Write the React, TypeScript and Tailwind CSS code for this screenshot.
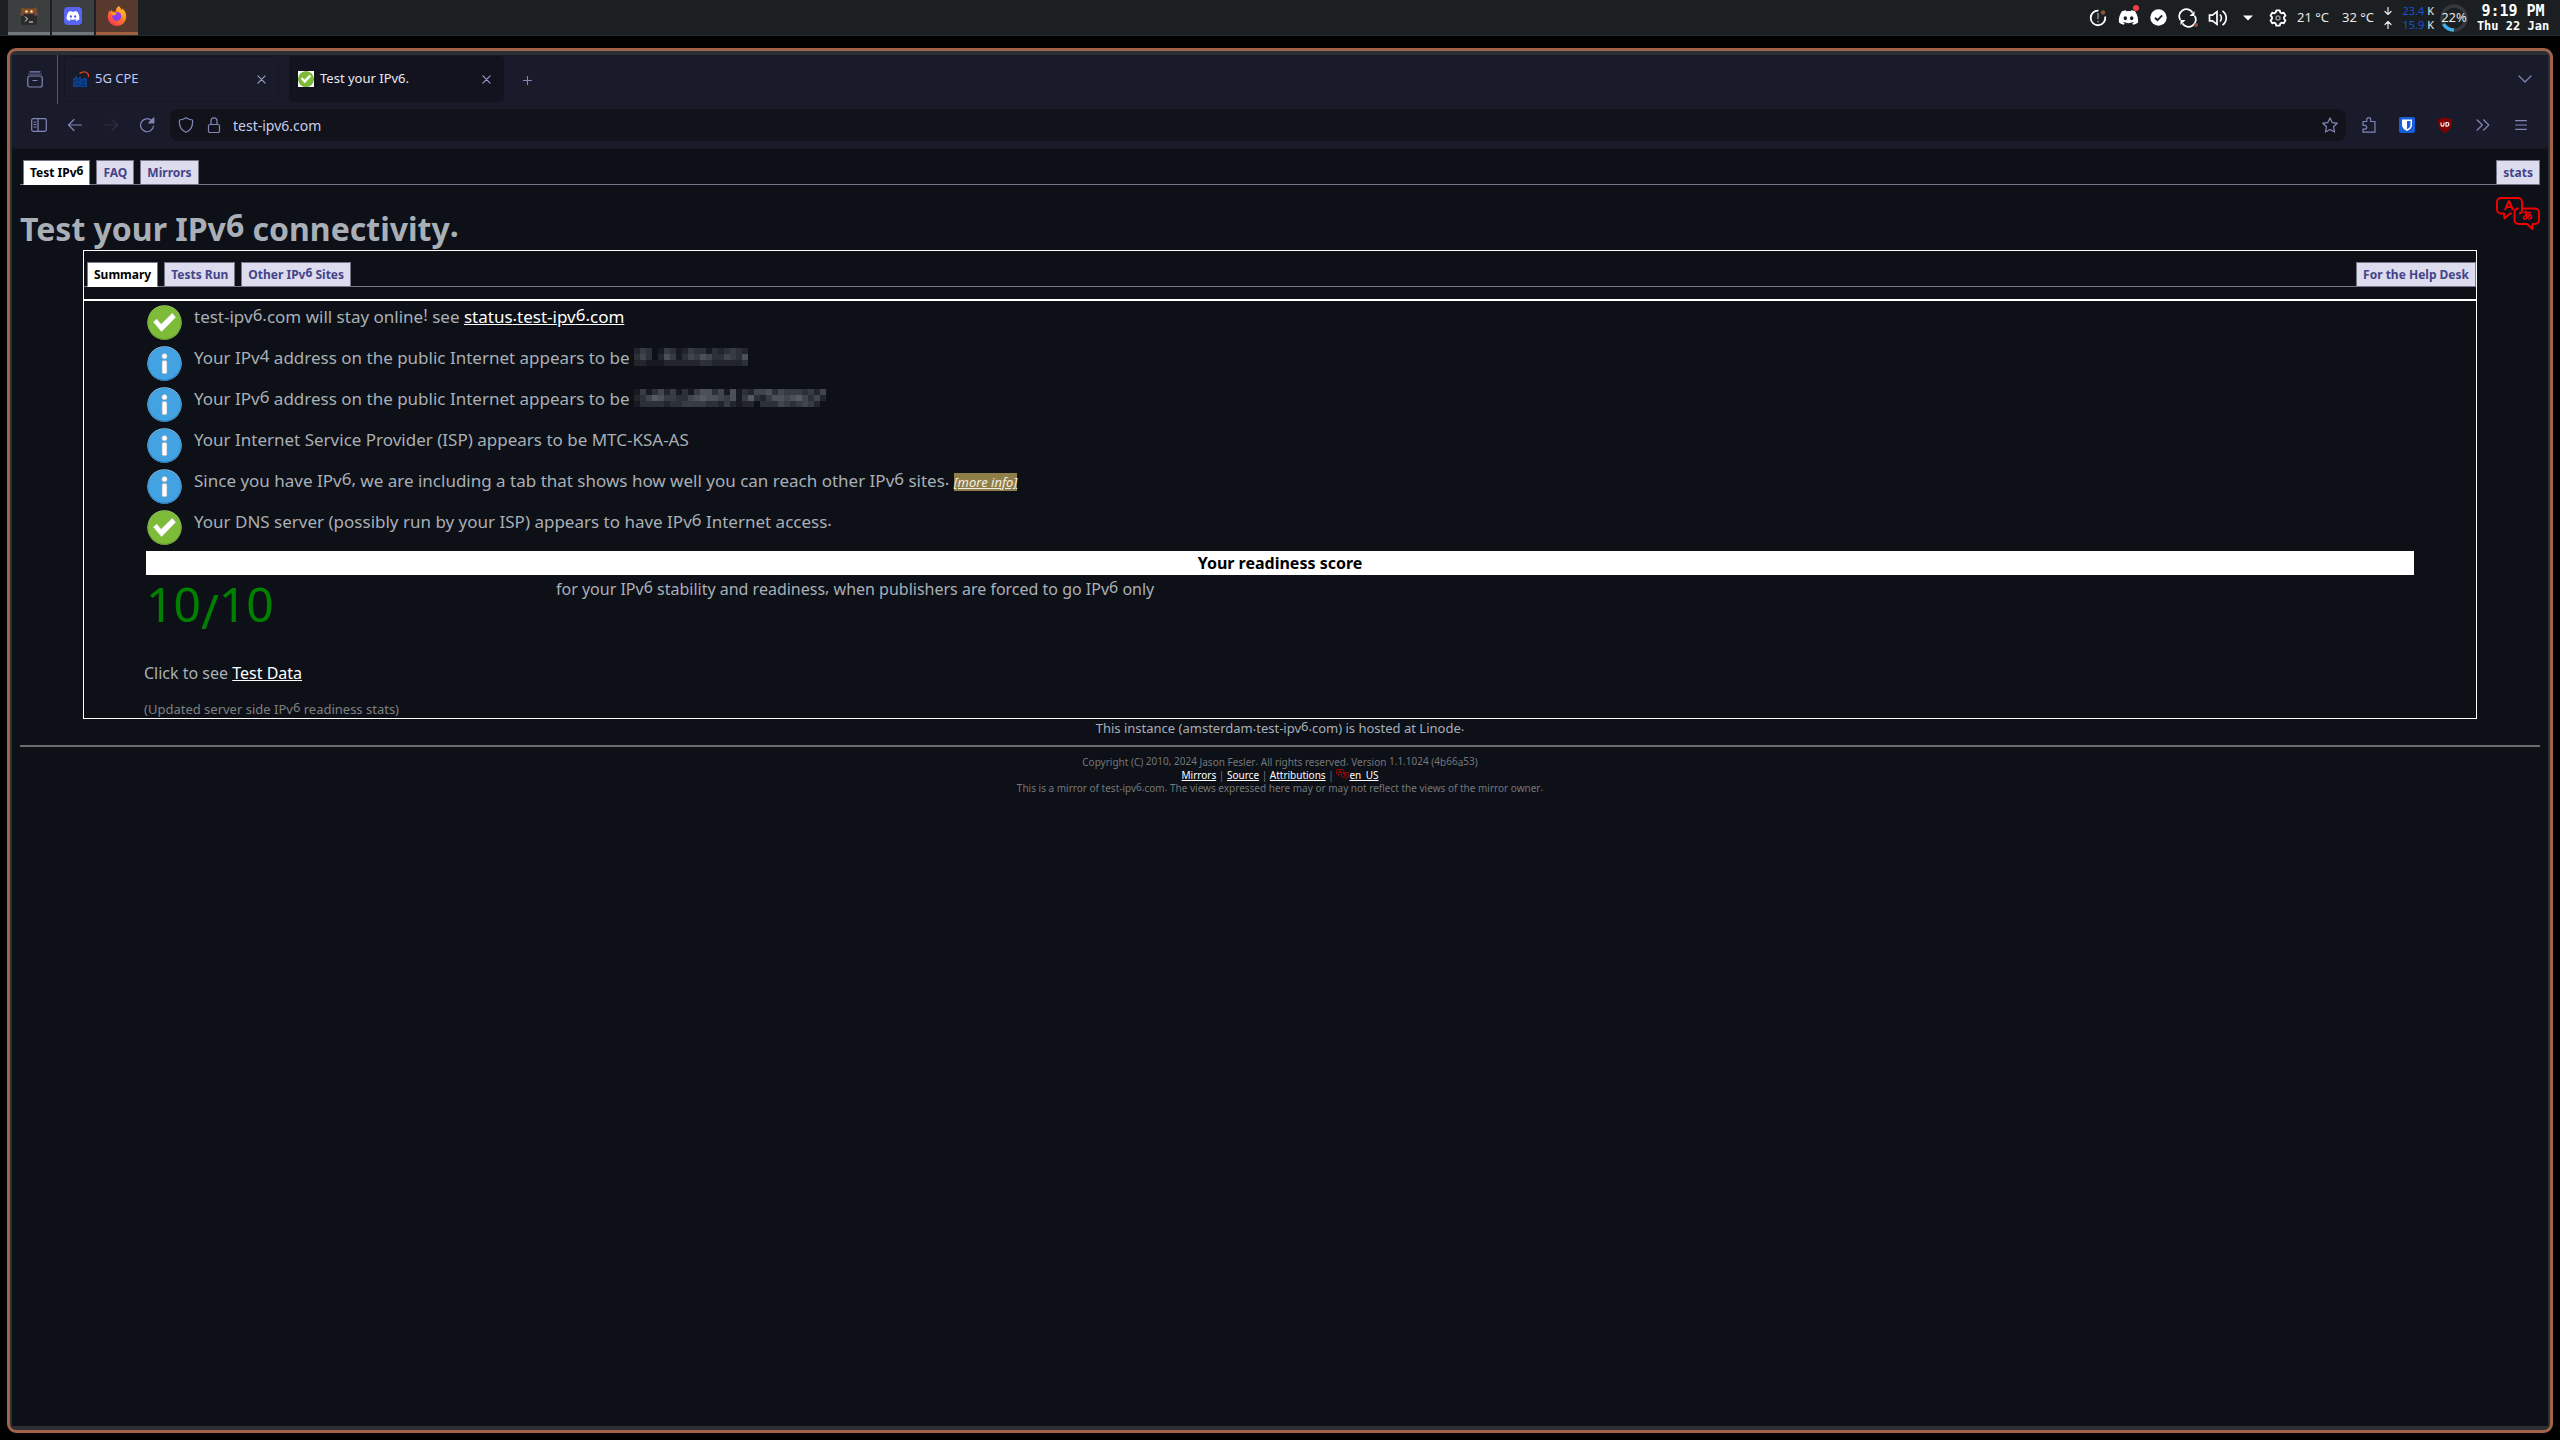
import type { ReactNode } from "react";
import { FaDiscord } from "react-icons/fa";

function Lift({ text, by = "align-[2px]" }: { text: string; by?: string }) {
  return (
    <>
      {text.split(/([0-9.,!]+)/).map((part, i) =>
        i % 2 ? (
          <span key={i} className={`leading-none ${by}`}>
            {part}
          </span>
        ) : (
          part
        )
      )}
    </>
  );
}

type Draw = { className?: string };

const line = {
  fill: "none",
  stroke: "currentColor",
  strokeWidth: 1.2,
  strokeLinecap: "round" as const,
  strokeLinejoin: "round" as const,
};

function TerminalIcon() {
  return (
    <svg viewBox="0 0 18 20" className="h-5 w-[18px]">
      <rect x="1" y="7" width="16" height="12" rx="2" fill="#2b2b2b" />
      <path d="M1 1l3 1.5h10L17 1l-.5 4L18 8H0l1.500-3z" fill="#8a4b22" />
      <circle cx="2" cy="8" r="2" fill="#6b4a40" />
      <circle cx="16" cy="8" r="2" fill="#6b4a40" />
      <circle cx="6.500" cy="5.500" r="1.200" fill="#ffe9c9" />
      <circle cx="11.500" cy="5.500" r="1.200" fill="#ffe9c9" />
      <path d="M5 10.500l2.500 2.500L5 15.500M9 16h4" fill="none" stroke="#eee" strokeWidth="1" />
    </svg>
  );
}

function FirefoxIcon() {
  return (
    <svg viewBox="0 0 20 20" className="size-5">
      <defs>
        <linearGradient id="fox" x1="1" y1="0" x2="0.200" y2="1">
          <stop offset="0" stopColor="#ffd23f" />
          <stop offset="0.450" stopColor="#ff8a1c" />
          <stop offset="1" stopColor="#ff3052" />
        </linearGradient>
      </defs>
      <path
        d="M11.500 0c2 1.200 2.600 3 3.200 4.200 0-.5.600-1.200.9-1.400 2.600 2.400 3.700 5 3.600 7.800A9.200 9.200 0 0 1 .8 11C.7 8 1.600 5.600 2.600 4.400l.6 1.300L4.700 3.800l.8 1.900c1-.4 2.200-.3 3.200.2C8.700 3.600 9.700 1.400 11.500 0z"
        fill="url(#fox)"
      />
      <circle cx="9.800" cy="10.400" r="4.500" fill="#8c3bf0" />
      <path d="M4 6.300c2-.8 4.500 0 6 1.600-1 .9-2.600.8-3.600 1.700C5.500 9 4.300 8 4 6.300z" fill="#ff9a1f" />
      <path d="M12 4.500c2.500 1.500 3.500 4.500 2 7.500 1.700-1.700 2.200-5-.2-7.500z" fill="#ffb52a" />
    </svg>
  );
}

function UpdateIcon() {
  return (
    <svg viewBox="0 0 18 18" className="size-[18px]">
      <path d="M11 1.900A7.300 7.300 0 1 0 16.300 9" fill="none" stroke="#fff" strokeWidth="1.800" transform="rotate(-12 9 9)" />
      <path d="M9 4v6M9 11.800v1.700" stroke="#8b8e90" strokeWidth="1.500" />
      <circle cx="14" cy="3.500" r="2.200" fill="#8f5337" />
    </svg>
  );
}

function TrayDiscord() {
  return (
    <span className="relative">
      <FaDiscord className="size-[21px]" />
      <span className="absolute -top-0.5 right-0 size-1.5 rounded-full bg-[#f23f43]" />
    </span>
  );
}

function CheckDisc() {
  return (
    <svg viewBox="0 0 18 18" className="size-[17px]">
      <circle cx="9" cy="9" r="8.700" fill="#fff" />
      <path d="M5.300 9.300l2.600 2.500 5-5" fill="none" stroke="#1b1f21" strokeWidth="2" />
    </svg>
  );
}

function SyncIcon() {
  return (
    <svg viewBox="0 0 20 20" className="size-5">
      <g fill="none" stroke="#fff" strokeWidth="1.800">
        <path d="M2.300 12A7 7 0 0 1 14.500 4.500M16.700 8A7 7 0 0 1 4.500 15.500" />
      </g>
      <path d="M16.500 3v5h-5zM2.500 17v-5h5z" fill="#fff" />
      <circle cx="18" cy="17" r="2" fill="#8f5337" />
    </svg>
  );
}

function VolumeIcon() {
  return (
    <svg viewBox="0 0 20 18" className="h-[18px] w-5" fill="none" stroke="#fff" strokeWidth="1.700">
      <path d="M1.500 6.200h3L9 2.700v12.600l-4.500-3.500h-3z" />
      <path d="M12 5.500c1.800 2 1.800 5 0 7M14.500 1.800c5 4 5 10.400 0 14.400" />
    </svg>
  );
}

function GearIcon() {
  return (
    <svg viewBox="0 0 18 18" className="size-[18px]" fill="none" stroke="#fff">
      <path
        strokeWidth="1.800"
        strokeLinejoin="round"
        d="M7.300 1.300h3.400l.6 2.200 1.300.8 2.200-.6 1.700 3L15 8.200v1.600l1.500 1.500-1.700 3-2.200-.6-1.300.8-.6 2.200H7.300l-.6-2.200-1.300-.8-2.200.6-1.700-3L3 9.800V8.200L1.500 6.700l1.700-3 2.200.6 1.300-.8z"
      />
      <circle cx="9" cy="9" r="2" stroke="#8b8e90" strokeWidth="1.500" />
    </svg>
  );
}

const tray: { label: string; icon: ReactNode }[] = [
  { label: "Notifications", icon: <UpdateIcon /> },
  { label: "Discord", icon: <TrayDiscord /> },
  { label: "Vault", icon: <CheckDisc /> },
  { label: "Updates", icon: <SyncIcon /> },
  { label: "Volume", icon: <VolumeIcon /> },
  {
    label: "Show hidden",
    icon: (
      <svg viewBox="0 0 10 6" className="h-1.5 w-2.5">
        <path d="M0 .5h10L5 5.500z" fill="#fff" />
      </svg>
    ),
  },
  { label: "Settings", icon: <GearIcon /> },
];

function TopPanel() {
  return (
    <header className="flex h-9 shrink-0 items-stretch justify-between border-b border-[#26292b] bg-[#1b1f21] pr-2.5 pl-2 text-[#e8e8e8]">
      <div className="flex gap-0.5">
        <button aria-label="Terminal" className="grid w-[42px] place-items-center border-b-[3px] border-[#74777a] bg-[#3b3f40]">
          <TerminalIcon />
        </button>
        <button aria-label="Discord" className="grid w-[42px] place-items-center border-b-[3px] border-[#74777a] bg-[#3b3f40]">
          <span className="grid size-[18px] place-items-center rounded bg-[#5865f2]">
            <FaDiscord className="size-3.5 text-white" />
          </span>
        </button>
        <button aria-label="Firefox" className="grid w-[42px] place-items-center border-b-[3px] border-[#a0603f] bg-[#58392e]">
          <FirefoxIcon />
        </button>
      </div>
      <div className="flex items-center">
        {tray.map((t) => (
          <button key={t.label} aria-label={t.label} className="grid h-9 w-[30px] place-items-center text-white">
            {t.icon}
          </button>
        ))}
        <span className="ml-1 w-[45px] text-[13px]">21 °C</span>
        <span className="w-[38px] text-[13px]">32 °C</span>
        <div className="flex w-4 flex-col items-center gap-1.5">
          <svg viewBox="0 0 8 8" className="size-2" {...line}>
            <path d="M4 .5v7M1 4.500l3 3 3-3" />
          </svg>
          <svg viewBox="0 0 8 8" className="size-2" {...line}>
            <path d="M4 7.500v-7M1 3.500l3-3 3 3" />
          </svg>
        </div>
        <div className="ml-1 w-[34px] text-right text-[11px] leading-[14px]">
          <div>
            <span className="text-[#1450d8]">23.4</span> K
          </div>
          <div>
            <span className="text-[#1450d8]">15.9</span> K
          </div>
        </div>
        <div className="relative ml-1.5 grid size-7 place-items-center">
          <svg viewBox="0 0 28 28" className="absolute inset-0" fill="none" strokeWidth="3.500">
            <circle cx="14" cy="14" r="12" stroke="#34383b" />
            <path d="M14 26A12 12 0 0 1 3.500 20" stroke="#3daee9" />
          </svg>
          <span className="relative text-[13px]">22%</span>
        </div>
        <div className="ml-2 w-[74px] text-center font-['DejaVu_Sans_Mono',monospace] font-bold whitespace-nowrap text-white">
          <div className="text-[15px] leading-[17px]">9:19 PM</div>
          <div className="text-[12px] leading-[13px]">Thu 22 Jan</div>
        </div>
      </div>
    </header>
  );
}

function CloseIcon() {
  return (
    <svg viewBox="0 0 10 10" className="size-[9px]" {...line}>
      <path d="M1 1l8 8M9 1L1 9" />
    </svg>
  );
}

function CheckBadge({ className }: Draw) {
  return (
    <svg viewBox="0 0 36 36" className={className}>
      <circle cx="18" cy="18" r="17.700" fill="#9fd06b" />
      <circle cx="18" cy="18.500" r="17.200" fill="#5f9a28" />
      <circle cx="18" cy="18" r="16.800" fill="#7dbb38" />
      <path d="M6.500 17.500l3.500-3 4.500 5.200L26 8.500l3.500 4L15 27.500z" fill="#fff" stroke="#d8d8d8" strokeWidth=".5" />
    </svg>
  );
}

function InfoBadge({ className }: Draw) {
  return (
    <svg viewBox="0 0 36 36" className={className}>
      <circle cx="18" cy="18" r="17.700" fill="#8cc8f0" />
      <circle cx="18" cy="18.500" r="17.200" fill="#2474b0" />
      <circle cx="18" cy="18" r="16.800" fill="#42a2e2" />
      <circle cx="18" cy="10.500" r="2.700" fill="#fff" stroke="#b8a9a9" strokeWidth=".5" />
      <rect x="15.500" y="15" width="5" height="13.500" rx="1.500" fill="#fff" stroke="#b8a9a9" strokeWidth=".5" />
    </svg>
  );
}

function BrowserTabs() {
  return (
    <div className="flex h-[49px] items-start">
      <button aria-label="Firefox View" className="grid h-[49px] w-[46px] place-items-center border-r border-[#54566a]">
        <svg viewBox="0 0 16 17" className="h-[17px] w-4" {...line}>
          <path d="M3 .8h10" />
          <path d="M1.500 3.200h13" opacity=".5" />
          <rect x=".8" y="5" width="14.400" height="11" rx="2" />
          <path d="M6 9.500h4" />
        </svg>
      </button>
      <div className="ml-1.5 flex gap-2.5 pt-px text-[13px]">
        <div className="flex h-[46px] w-[215px] items-center rounded border border-[#151624] px-2 text-[#c0caf5]">
          <svg viewBox="0 0 16 16" className="mr-1.5 size-4">
            <path d="M0 7h2V5h2v2h2V6h2v2h2V7h4v9H0z" fill="#0b3f8c" />
            <path d="M1 10h2M5 9h2M9 11h3M3 13h3M8 14h4" stroke="#06224f" />
            <path d="M6.500 2.500C11-1 16.500 1.500 15.300 6" fill="none" stroke="#e2471d" strokeWidth="1.200" />
          </svg>
          <span className="flex-1">5G CPE</span>
          <button aria-label="Close 5G CPE" className="mr-1 text-[#9aa0cc]">
            <CloseIcon />
          </button>
        </div>
        <div className="flex h-[46px] w-[215px] items-center rounded border border-[#12131e] bg-[#12131e] px-2 text-[#e6e9f5]">
          <span className="mr-1.5 bg-white">
            <CheckBadge className="size-4" />
          </span>
          <span className="flex-1">Test your IPv6.</span>
          <button aria-label="Close Test your IPv6." className="mr-1 text-[#9aa0cc]">
            <CloseIcon />
          </button>
        </div>
      </div>
      <button aria-label="New tab" className="grid h-[50px] w-[47px] place-items-center">
        <svg viewBox="0 0 10 10" className="size-[9px]" {...line}>
          <path d="M5 .5v9M.5 5h9" />
        </svg>
      </button>
      <button aria-label="List all tabs" className="mr-2 ml-auto grid h-12 w-[30px] place-items-center">
        <svg viewBox="0 0 14 8" className="h-2 w-3.5" {...line}>
          <path d="M1 1l6 6 6-6" />
        </svg>
      </button>
    </div>
  );
}

function ToolButton({ label, children }: { label: string; children: ReactNode }) {
  return (
    <button aria-label={label} className="grid h-8 w-[38px] place-items-center">
      {children}
    </button>
  );
}

function Toolbar() {
  return (
    <div className="flex h-[45px] items-center border-b border-[#151622] pr-2 pb-0.5 pl-[9px]">
      <button aria-label="Sidebars" className="grid h-8 w-9 place-items-center">
        <svg viewBox="0 0 16 14" className="h-3.5 w-4" {...line}>
          <rect x=".7" y=".7" width="14.600" height="12.600" rx="1.500" />
          <path d="M7 1v12M3 4h2M3 6.500h2M3 9h2" />
        </svg>
      </button>
      <button aria-label="Back" className="grid h-8 w-9 place-items-center">
        <svg viewBox="0 0 16 14" className="h-3.5 w-4" {...line}>
          <path d="M14.500 7h-13M7 1.500L1.500 7 7 12.500" />
        </svg>
      </button>
      <button aria-label="Forward" disabled className="grid h-8 w-9 place-items-center text-[#2d2f44]">
        <svg viewBox="0 0 16 14" className="h-3.5 w-4" {...line}>
          <path d="M1.500 7h13M9 1.500L14.500 7 9 12.500" />
        </svg>
      </button>
      <button aria-label="Reload" className="grid h-8 w-9 place-items-center">
        <svg viewBox="0 0 16 16" className="size-4" {...line}>
          <path d="M14.500 9A6.500 6.500 0 1 1 12.500 3.500" />
          <path d="M14.800.8v5H9.800z" fill="currentColor" />
        </svg>
      </button>
      <div className="mr-1 ml-[5px] flex h-8 flex-1 items-center rounded-lg bg-[#12121b]">
        <svg viewBox="0 0 16 16" className="ml-2 size-4" {...line}>
          <path d="M8 .8C6 2.200 4 2.800 1.500 3c-.5 5 1 10 6.500 12.300C13.500 13 15 8 14.500 3 12 2.800 10 2.200 8 .8z" />
        </svg>
        <svg viewBox="0 0 14 16" className="mr-3 ml-[13px] h-4 w-3.5" {...line}>
          <rect x="1.500" y="7.500" width="11" height="8" rx="1.500" />
          <path d="M4 7.500V3.800a3 3 0 0 1 6 0v3.700" />
        </svg>
        <input
          aria-label="Address"
          defaultValue="test-ipv6.com"
          className="min-w-0 flex-1 bg-transparent text-[14px] text-[#c8cde8] outline-none"
        />
        <button aria-label="Bookmark this page" className="grid size-8 place-items-center">
          <svg viewBox="0 0 16 16" className="size-4" {...line}>
            <path d="M8 .9l2.200 4.700 5 .6-3.700 3.500 1 5.200L8 12.400l-4.500 2.500 1-5.200L.8 6.200l5-.6z" />
          </svg>
        </button>
      </div>
      <ToolButton label="Extensions">
        <svg viewBox="0 0 14 16" className="h-4 w-3.5" {...line}>
          <path d="M1 4.500h3.700V2.700a2 2 0 0 1 4 0v1.800H13v10.700H1v-3h1.800a1.900 1.900 0 0 0 0-3.800H1z" />
        </svg>
      </ToolButton>
      <ToolButton label="Bitwarden">
        <svg viewBox="0 0 16 16" className="size-4">
          <rect width="16" height="16" rx="2" fill="#175ddc" />
          <path d="M3 2.500h10V8c0 3-2.500 4.800-5 6-2.500-1.200-5-3-5-6z" fill="#fff" />
          <path d="M8 4h3.500v4c0 1.800-1.600 3.200-3.500 4.300z" fill="#175ddc" />
        </svg>
      </ToolButton>
      <ToolButton label="uBlock Origin">
        <svg viewBox="0 0 16 16" className="size-4">
          <path d="M8 0c2 1.300 4 2 7 2.300 0 6-1 10.500-7 13.700C2 12.800 1 8.300 1 2.300 4 2 6 1.300 8 0z" fill="#800000" />
          <path d="M4 5.500v2.300c0 1.800 3 1.800 3 0V5.500M9 5.500v3.700h.8c2.800 0 2.800-3.700 0-3.700z" fill="none" stroke="#fff" strokeWidth="1.100" />
        </svg>
      </ToolButton>
      <ToolButton label="More tools">
        <svg viewBox="0 0 14 12" className="h-3 w-3.5" {...line}>
          <path d="M1 .8L6.300 6 1 11.200M7.500.8L12.800 6l-5.300 5.200" />
        </svg>
      </ToolButton>
      <ToolButton label="Application menu">
        <svg viewBox="0 0 12 10" className="h-2.5 w-3" {...line}>
          <path d="M.6.700h10.800M.6 5h10.800M.6 9.300h10.800" />
        </svg>
      </ToolButton>
    </div>
  );
}

function Tab({ text, active }: { text: string; active?: boolean }) {
  return (
    <a
      href="#"
      className={
        active
          ? "-mb-px flex h-[25px] items-center border border-[#77778a] border-b-white bg-white px-1.5 text-black"
          : "-mb-px flex h-[25px] items-center border border-[#77778a] bg-[#dddcee] px-1.5 text-[#444488]"
      }
    >
      <span>
        <Lift text={text} />
      </span>
    </a>
  );
}

function TabRow({ tabs, right }: { tabs: string[]; right: string }) {
  return (
    <nav className="flex justify-between border-b border-[#77778a] pl-[3px] text-[12px] leading-[17px] font-bold">
      <div className="flex gap-1.5">
        {tabs.map((t, i) => (
          <Tab key={t} text={t} active={i === 0} />
        ))}
      </div>
      <Tab text={right} />
    </nav>
  );
}

function LangIcon({ className }: Draw) {
  return (
    <svg viewBox="0 0 44 33" className={className} fill="none" stroke="#f00000" strokeWidth="2" strokeLinejoin="round">
      <path d="M16 16.500h-2L8.500 21.500l-.5-5H5a4 4 0 0 1-4-4V5a4 4 0 0 1 4-4h17a4 4 0 0 1 4 4v8c0 2-1 3.500-3 3.500" />
      <path d="M27 11.500h12a4 4 0 0 1 4 4v7.500a4 4 0 0 1-4 4h-2.500v5L31 27h-8.500a4 4 0 0 1-4-4v-7.500c0-2.500 1.500-4 4-4" />
      <path d="M9 13l4-9 4 9M10.500 10h5" />
      <path d="M27 15.500h8M30 13.500c-.3 3 0 6 1 8.500M34 17c-1 3-4 5.500-6 5-1.500-1 .5-4.500 4.500-4.500 4 .3 4 4-.2 5" strokeWidth="1.500" />
    </svg>
  );
}

/* Grey levels (0-9) of the mosaic that hides an address. */
function Mosaic({ rows }: { rows: string[] }) {
  return (
    <svg
      role="img"
      aria-label="hidden address"
      width={rows[0].length * 6}
      height={rows.length * 6}
      className="inline-block align-[-2px]"
      shapeRendering="crispEdges"
    >
      {rows.map((row, y) =>
        row
          .split("")
          .map((c, x) => (
            <rect key={`${x}-${y}`} x={x * 6} y={y * 6} width="6" height="6" fill="#98a0a8" opacity={Number(c) * 0.075} />
          ))
      )}
    </svg>
  );
}

const ipv4 = ["2430143124331323432", "3530264135465335436", "2211122222233222223"];
const ipv6 = [
  "14135241314663516132556354443425",
  "23576443356766546147324665675352",
  "13333233444433242122033354345420",
];

const findings: { ok?: boolean; body: ReactNode }[] = [
  {
    ok: true,
    body: (
      <>
        <Lift text="test-ipv6.com will stay online! see " />
        <a href="#" className="text-white underline">
          <Lift text="status.test-ipv6.com" />
        </a>
      </>
    ),
  },
  {
    body: (
      <>
        <Lift text="Your IPv4 address on the public Internet appears to be " />
        <Mosaic rows={ipv4} />
      </>
    ),
  },
  {
    body: (
      <>
        <Lift text="Your IPv6 address on the public Internet appears to be " />
        <Mosaic rows={ipv6} />
      </>
    ),
  },
  { body: "Your Internet Service Provider (ISP) appears to be MTC-KSA-AS" },
  {
    body: (
      <>
        <Lift text="Since you have IPv6, we are including a tab that shows how well you can reach other IPv6 sites. " />
        <a href="#" className="bg-[#8f7d4a] text-[13px] leading-none text-[#f5f0e0] italic underline">
          [more info]
        </a>
      </>
    ),
  },
  {
    ok: true,
    body: <Lift text="Your DNS server (possibly run by your ISP) appears to have IPv6 Internet access." />,
  },
];

function Summary() {
  return (
    <section className="mx-[63px] border border-white pt-[11px]">
      <TabRow tabs={["Summary", "Tests Run", "Other IPv6 Sites"]} right="For the Help Desk" />
      <hr className="mt-3 border-t-2 border-white" />
      <ul className="mx-[63px] pt-px pb-[3px]">
        {findings.map((f, i) => (
          <li key={i} className="flex h-[41px] items-start gap-3 pt-[3px]">
            {f.ok ? <CheckBadge className="size-[35px] shrink-0" /> : <InfoBadge className="size-[35px] shrink-0" />}
            <span className="h-6 text-[17px] leading-6">{f.body}</span>
          </li>
        ))}
      </ul>
      <h2 className="mx-[62px] bg-white text-center text-[16px] leading-6 font-bold text-black">Your readiness score</h2>
      <div className="mx-[62px] flex items-start pt-[3px]">
        <span className="w-[410px] text-[48px] leading-[66px] text-[#008000]">
          <Lift text="10/10" by="align-[7px]" />
        </span>
        <span className="text-[16px] leading-[22px]">
          <Lift text="for your IPv6 stability and readiness, when publishers are forced to go IPv6 only" />
        </span>
      </div>
      <p className="mt-[18px] ml-[60px] text-[16px] leading-[22px]">
        Click to see{" "}
        <a href="#" className="text-white underline">
          Test Data
        </a>
      </p>
      <p className="mt-4 ml-[60px] text-[13px] leading-[18px] text-[#808080]">
        <Lift text="(Updated server side IPv6 readiness stats)" />
      </p>
    </section>
  );
}

function Page() {
  return (
    <main className="flex-1 bg-[#0d1017] px-2 pt-[11px] text-[#a9afb6]">
      <TabRow tabs={["Test IPv6", "FAQ", "Mirrors"]} right="stats" />
      <div className="flex items-start justify-between">
        <h1 className="mt-[22px] text-[32px] leading-[43px] font-bold">
          <Lift text="Test your IPv6 connectivity." by="align-[4px]" />
        </h1>
        <button aria-label="Choose language" className="mt-3">
          <LangIcon className="h-[33px] w-11" />
        </button>
      </div>
      <Summary />
      <footer className="text-center">
        <p className="text-[13px] leading-[18px]">
          <Lift text="This instance (amsterdam.test-ipv6.com) is hosted at Linode." />
        </p>
        <hr className="mt-2 border-t-2 border-[#6b6d70]" />
        <div className="mt-[9px] text-[10px] leading-[13px] text-[#74777b]">
          <p>
            <Lift text="Copyright (C) 2010, 2024 Jason Fesler. All rights reserved. Version 1.1.1024 (4b66a53)" by="align-[1px]" />
          </p>
          <p>
            <a href="#" className="text-white underline">Mirrors</a> |{" "}
            <a href="#" className="text-white underline">Source</a> |{" "}
            <a href="#" className="text-white underline">Attributions</a> |{" "}
            <a href="#" className="text-white underline">
              <LangIcon className="inline h-2.5 w-[13px] align-baseline" />
              en_US
            </a>
          </p>
          <p>
            <Lift text="This is a mirror of test-ipv6.com. The views expressed here may or may not reflect the views of the mirror owner." by="align-[1px]" />
          </p>
        </div>
      </footer>
    </main>
  );
}

export default function App() {
  return (
    <div className="flex min-h-screen flex-col bg-black font-['Noto_Sans',sans-serif]">
      <TopPanel />
      <div className="mx-[7px] mt-3 mb-[7px] flex flex-1 flex-col rounded-[9px] border-[3px] border-[#a0634a] bg-[#2c3034] px-0.5 py-1">
        <div className="bg-[#1a1b2a] text-[#8087b8]">
          <BrowserTabs />
          <Toolbar />
        </div>
        <Page />
      </div>
    </div>
  );
}
